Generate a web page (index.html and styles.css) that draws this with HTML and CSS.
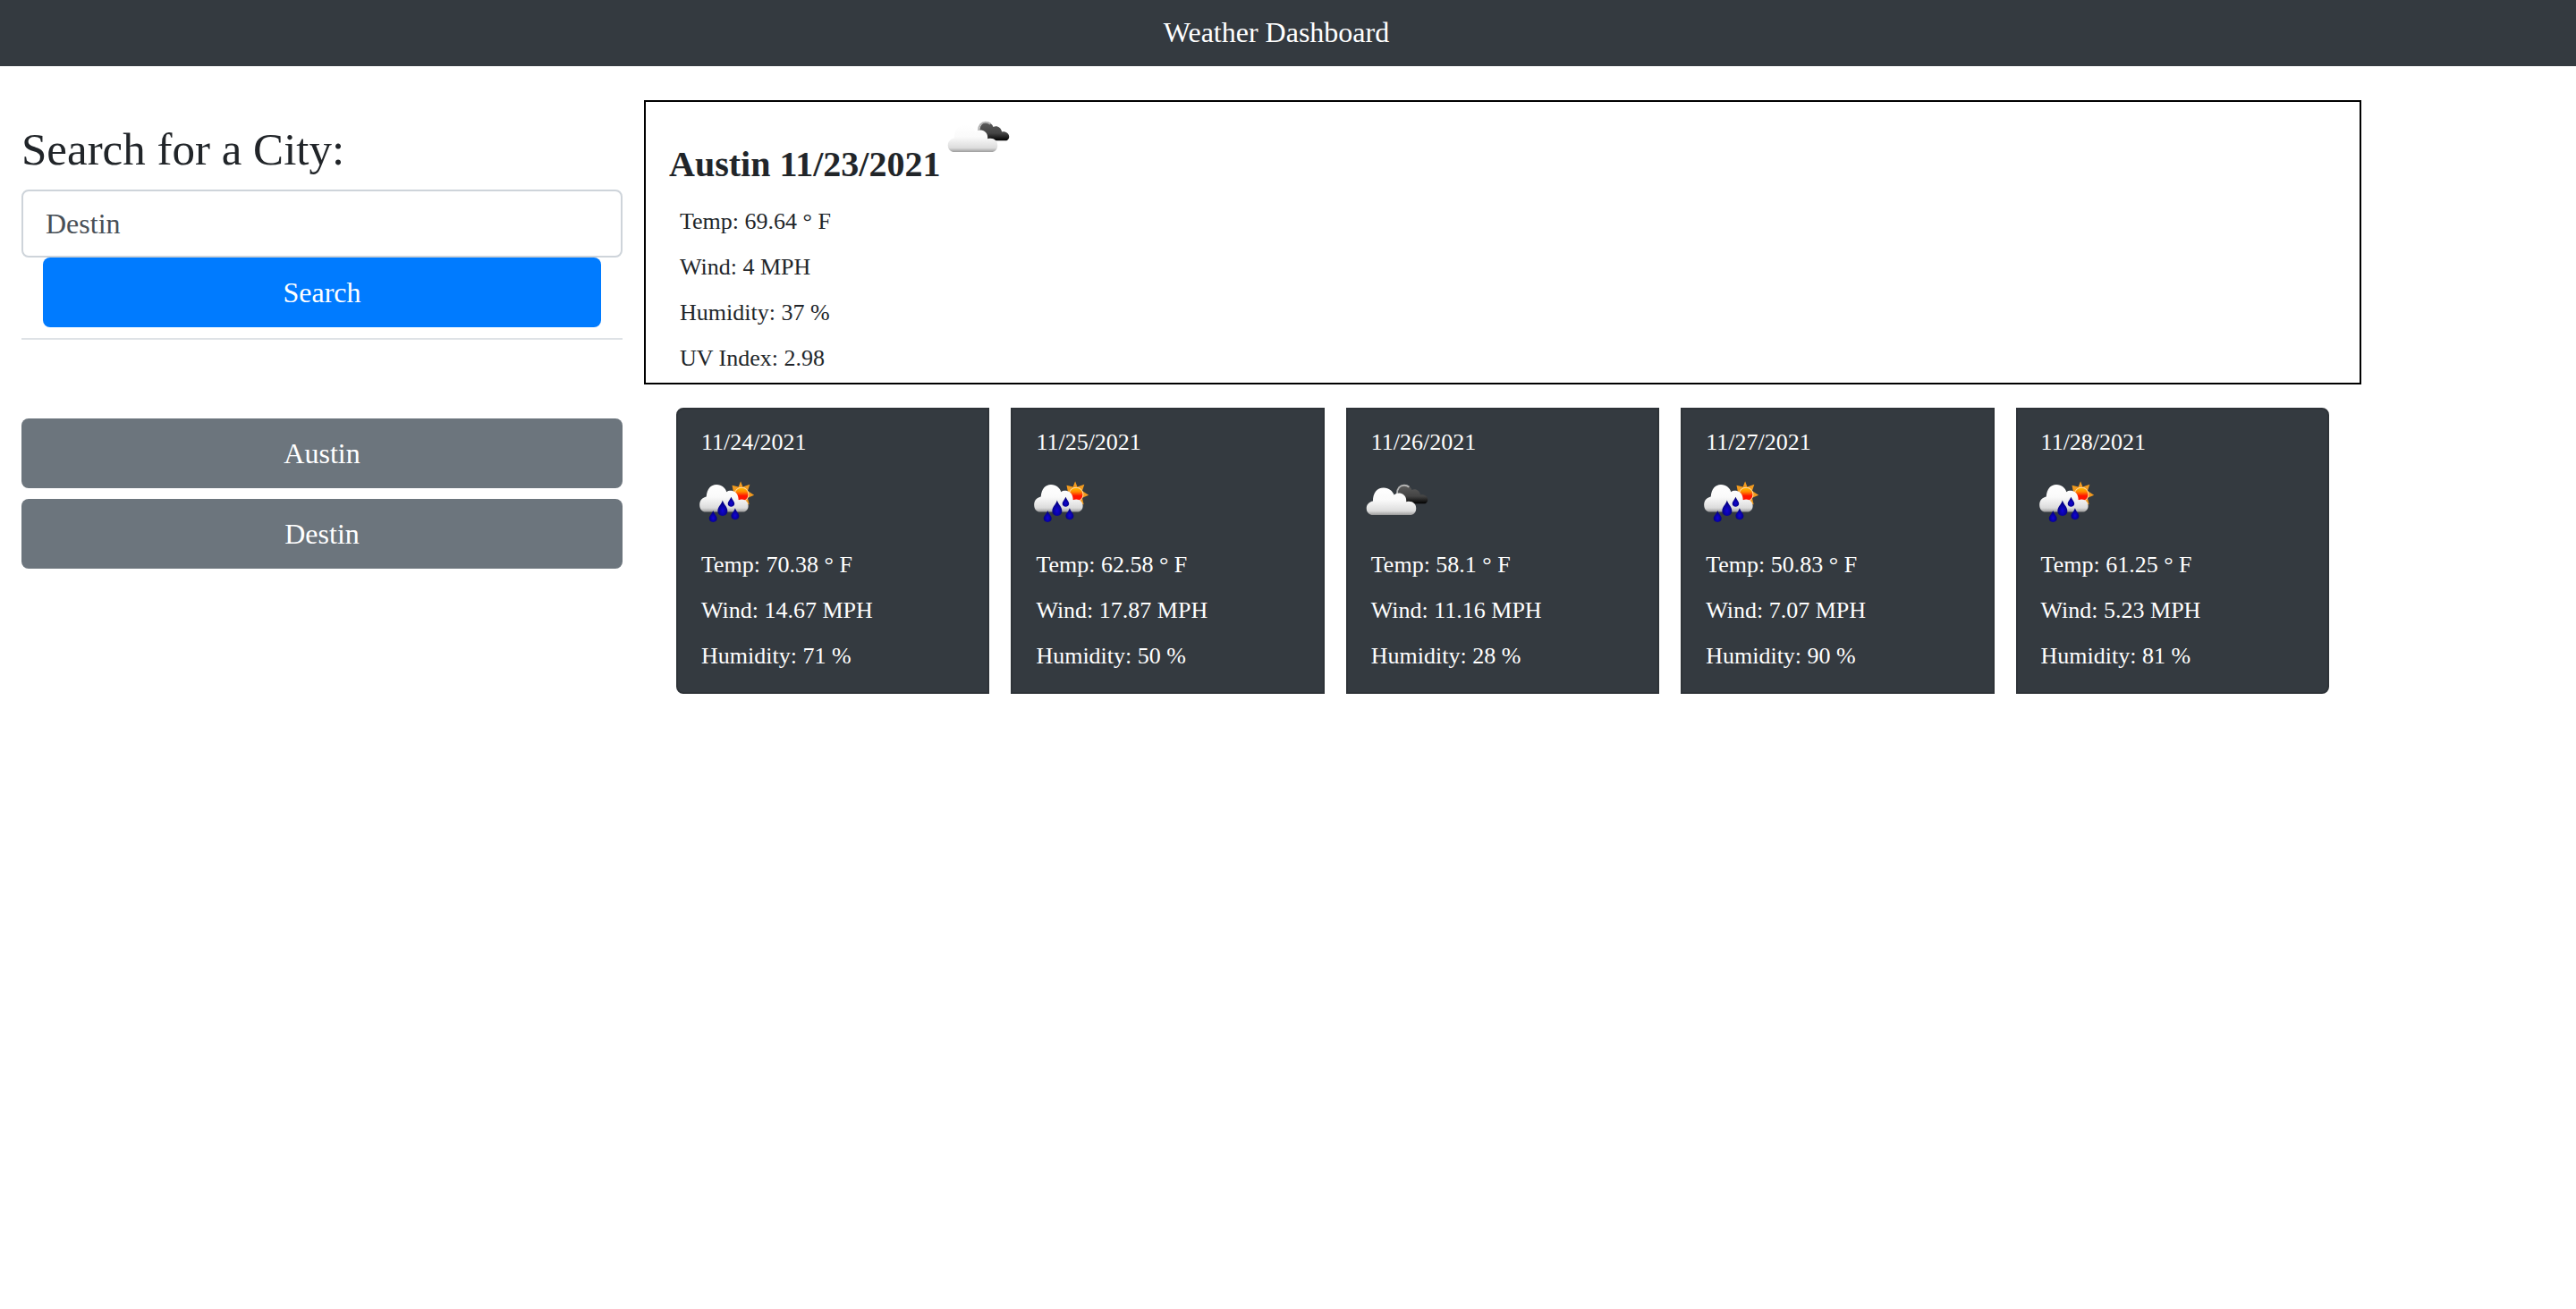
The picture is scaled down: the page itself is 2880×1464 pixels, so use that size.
FILE: index.html
```html
<!DOCTYPE html>
<html lang="en">
<head>
  <meta charset="utf-8">
  <meta name="viewport" content="width=device-width, initial-scale=1">
  <title>Weather Dashboard</title>
  <link rel="stylesheet" href="styles.css">
</head>
<body>
  <svg class="sprite" aria-hidden="true">
    <defs>
      <linearGradient id="cloud-light" x1="0" y1="0" x2="0" y2="1">
        <stop offset="0" stop-color="#ffffff"/>
        <stop offset="0.45" stop-color="#fafafa"/>
        <stop offset="0.85" stop-color="#dcdcdc"/>
        <stop offset="1" stop-color="#9c9c9c"/>
      </linearGradient>
      <linearGradient id="cloud-dark" x1="0" y1="0" x2="0" y2="1">
        <stop offset="0" stop-color="#5c5c5c"/>
        <stop offset="0.6" stop-color="#444444"/>
        <stop offset="1" stop-color="#000000"/>
      </linearGradient>
      <linearGradient id="sun" x1="0" y1="0" x2="0" y2="1">
        <stop offset="0" stop-color="#ffc000"/>
        <stop offset="0.3" stop-color="#ff8a00"/>
        <stop offset="0.6" stop-color="#ff1400"/>
        <stop offset="1" stop-color="#ff1400"/>
      </linearGradient>
      <radialGradient id="drop" cx="0.5" cy="0.65" r="0.6">
        <stop offset="0" stop-color="#1204d8"/>
        <stop offset="1" stop-color="#00006e"/>
      </radialGradient>
    </defs>
    <symbol id="icon-clouds" viewBox="0 0 216 216">
      <path fill="url(#cloud-dark)" d="M140 109L112 80C111 62 119 50 132 48C145 48 153 55 156 64C168 58 182 66 184 80C198 78 208 86 208 96C208 104 202 109 194 109Z"/>
      <path fill="none" stroke="#b4b4b4" stroke-width="6" d="M108 77C108 59 118 49 131 49C138 49 143 51 147 55"/>
      <path fill="url(#cloud-light)" d="M30 146C16 146 8 136 8 124C8 112 17 103 29 101C29 74 42 57 64 57C82 57 93 68 98 80C104 75 112 73 120 75C132 78 139 88 138 103C156 98 170 108 170 124C170 138 161 146 150 146Z"/>
    </symbol>
    <symbol id="icon-rain" viewBox="0 0 216 216">
      <path fill="#f29a1e" d="M152 36L159 54L182 46L175 67L196 81L175 90L180 112L155 106L130 79L124 49L145 54Z"/>
      <circle cx="155" cy="79" r="23" fill="url(#sun)" stroke="#ffd9a0" stroke-width="3"/>
      <path fill="url(#cloud-light)" d="M38 136C25 136 18 126 18 113C18 98 27 89 40 86C42 62 54 47 73 47C91 47 102 58 106 71C112 66 120 66 127 68C138 71 145 81 145 97C160 90 177 99 177 116C177 129 169 136 158 136Z"/>
      <path fill="url(#drop)" d="M93 98C97 112 109 119 109 133C109 142 102 149 93 149C84 149 77 142 77 133C77 119 89 112 93 98Z"/>
      <path fill="url(#drop)" d="M121 87C124 96 132 101 132 109C132 115 127 119 121 119C115 119 110 115 110 109C110 101 118 96 121 87Z"/>
      <path fill="url(#drop)" d="M62 131C65 142 75 148 75 157C75 164 70 169 62 169C54 169 49 164 49 157C49 148 59 142 62 131Z"/>
      <path fill="url(#drop)" d="M134 123C137 134 147 140 147 149C147 156 142 161 134 161C126 161 121 156 121 149C121 140 131 134 134 123Z"/>
    </symbol>
  </svg>

  <header class="navbar">
    <h1 class="navbar-brand">Weather Dashboard</h1>
  </header>

  <main class="dashboard">
    <aside class="sidebar">
      <form class="search-form">
        <label class="search-label" for="city">Search for a City:</label>
        <input class="search-input" id="city" type="text" value="Destin">
        <button class="btn btn-primary" type="button">Search</button>
      </form>
      <div class="history">
        <button class="btn btn-secondary" type="button">Austin</button>
        <button class="btn btn-secondary" type="button">Destin</button>
      </div>
    </aside>

    <div class="content">
      <section class="current">
        <div class="current-heading">
          <h2 class="current-title">Austin 11/23/2021</h2>
          <svg class="icon" role="img" aria-label="Broken clouds"><use href="#icon-clouds"/></svg>
        </div>
        <div class="current-details">
          <p>Temp: 69.64 ° F</p>
          <p>Wind: 4 MPH</p>
          <p>Humidity: 37 %</p>
          <p>UV Index: 2.98</p>
        </div>
      </section>

      <section class="forecast">
        <article class="card">
          <p>11/24/2021</p>
          <svg class="icon card-icon" role="img" aria-label="Rain"><use href="#icon-rain"/></svg>
          <p>Temp: 70.38 ° F</p>
          <p>Wind: 14.67 MPH</p>
          <p>Humidity: 71 %</p>
        </article>
        <article class="card">
          <p>11/25/2021</p>
          <svg class="icon card-icon" role="img" aria-label="Rain"><use href="#icon-rain"/></svg>
          <p>Temp: 62.58 ° F</p>
          <p>Wind: 17.87 MPH</p>
          <p>Humidity: 50 %</p>
        </article>
        <article class="card">
          <p>11/26/2021</p>
          <svg class="icon card-icon" role="img" aria-label="Broken clouds"><use href="#icon-clouds"/></svg>
          <p>Temp: 58.1 ° F</p>
          <p>Wind: 11.16 MPH</p>
          <p>Humidity: 28 %</p>
        </article>
        <article class="card">
          <p>11/27/2021</p>
          <svg class="icon card-icon" role="img" aria-label="Rain"><use href="#icon-rain"/></svg>
          <p>Temp: 50.83 ° F</p>
          <p>Wind: 7.07 MPH</p>
          <p>Humidity: 90 %</p>
        </article>
        <article class="card">
          <p>11/28/2021</p>
          <svg class="icon card-icon" role="img" aria-label="Rain"><use href="#icon-rain"/></svg>
          <p>Temp: 61.25 ° F</p>
          <p>Wind: 5.23 MPH</p>
          <p>Humidity: 81 %</p>
        </article>
      </section>
    </div>
  </main>
</body>
</html>
```
FILE: styles.css
```css
*,
*::before,
*::after {
  box-sizing: border-box;
}

body {
  margin: 0;
  background: #fff;
  color: #212529;
  font-family: "Liberation Serif", "Times New Roman", serif;
  font-size: 26px;
  line-height: 39px;
}

h1,
h2,
p {
  margin: 0;
}

.sprite {
  position: absolute;
  width: 0;
  height: 0;
}

.navbar {
  display: flex;
  justify-content: center;
  padding: 12px 24px 14px;
  background: #343a40;
  color: #fff;
}

.navbar-brand {
  margin-right: 26px;
  font-size: 32px;
  font-weight: 400;
  line-height: 48px;
}

.dashboard {
  display: grid;
  grid-template-columns: 3fr 8fr 1fr;
  align-items: start;
  padding-top: 38px;
}

/* Search column */

.sidebar {
  padding: 24px 24px 0;
}

.search-form {
  display: flex;
  flex-direction: column;
  padding-bottom: 12px;
  border-bottom: 2px solid #dee2e6;
}

.search-label {
  margin-bottom: 14px;
  font-size: 51px;
  line-height: 62px;
}

.search-input {
  width: 100%;
  height: 76px;
  padding: 12px 25px;
  border: 2px solid #ced4da;
  border-radius: 8px;
  background: #fff;
  color: #495057;
  font-family: inherit;
  font-size: 32px;
  line-height: 48px;
}

.btn {
  padding: 15px 24px;
  border: 0;
  border-radius: 8px;
  color: #fff;
  font-family: inherit;
  font-size: 32px;
  line-height: 48px;
  text-align: center;
  cursor: pointer;
}

.btn-primary {
  margin: 0 24px;
  background: #007bff;
}

.btn-secondary {
  background: #6c757d;
}

.history {
  display: flex;
  flex-direction: column;
  gap: 12px;
  margin-top: 88px;
}

/* Current conditions */

.current {
  padding: 6px 26px 8px;
  border: 2px solid #000;
}

.current-heading {
  display: flex;
  gap: 6px;
  height: 90px;
  margin-bottom: 18px;
}

.current-title {
  align-self: flex-end;
  font-size: 40px;
  font-weight: 700;
  line-height: 52px;
}

.current-details {
  display: flex;
  flex-direction: column;
  gap: 12px;
  padding-left: 12px;
}

.icon {
  flex: none;
  width: 74px;
  height: 74px;
}

/* Five-day forecast */

.forecast {
  display: grid;
  grid-template-columns: repeat(5, 1fr);
  gap: 24px;
  padding: 26px 36px 0;
}

.card {
  display: flex;
  flex-direction: column;
  gap: 12px;
  padding: 17px 26px 21px;
  border: 2px solid #2e3338;
  background: #343a40;
  color: #fff;
}

.card:first-child {
  border-radius: 8px 0 0 8px;
}

.card:last-child {
  border-radius: 0 8px 8px 0;
}

.card-icon {
  margin-left: -8px;
}
```
